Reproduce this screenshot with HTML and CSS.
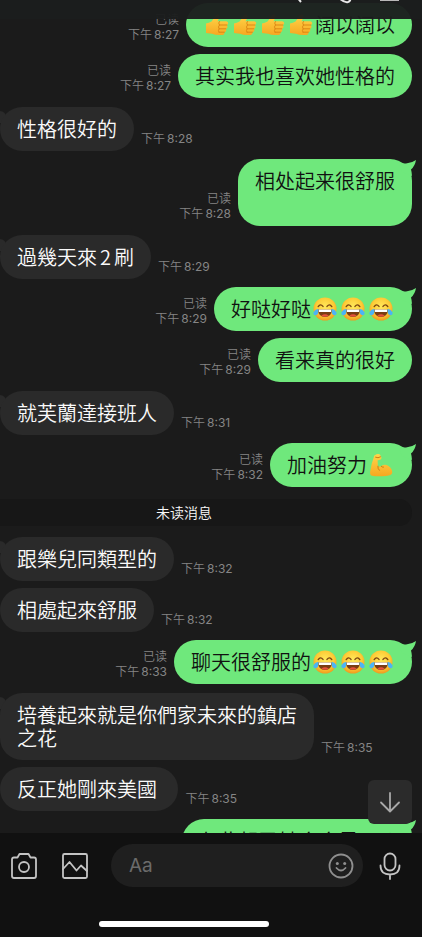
FILE: index.html
```html
<!DOCTYPE html>
<html lang="zh">
<head>
<meta charset="utf-8">
<meta name="viewport" content="width=device-width, initial-scale=1">
<title>聊天</title>
<link rel="stylesheet" href="styles.css">
</head>
<body>
<svg class="defs" aria-hidden="true">
  <defs>
    <radialGradient id="face" cx="50%" cy="40%" r="60%">
      <stop offset="0" stop-color="#ffe95c"/>
      <stop offset="0.65" stop-color="#fdcb35"/>
      <stop offset="1" stop-color="#ef9a1e"/>
    </radialGradient>
    <linearGradient id="skin" x1="0" y1="0" x2="0" y2="1">
      <stop offset="0" stop-color="#ffd54a"/>
      <stop offset="1" stop-color="#f6a821"/>
    </linearGradient>
    <symbol id="joy" viewBox="0 0 24 24">
      <circle cx="12" cy="12" r="11.500" fill="url(#face)"/>
      <path d="M5.2 9.600Q7.400 6.200 10 9.400M14 9.400Q16.600 6.200 18.800 9.600" fill="none" stroke="#7a4410" stroke-width="1.400" stroke-linecap="round"/>
      <path d="M5 12.600H19Q18.600 20 12 20T5 12.600Z" fill="#7a3d12"/>
      <path d="M5.600 12.600H18.400L18 15H6Z" fill="#fff"/>
      <path d="M8.200 18.700Q12 15.800 15.800 18.700Q12 21 8.200 18.700Z" fill="#e8503a"/>
      <path d="M5.200 11.800Q6 17.600 2.800 18.200Q-.4 18.300 .6 15.200Q1.600 12.800 5.200 11.800ZM18.800 11.800Q18 17.600 21.200 18.200Q24.400 18.300 23.400 15.200Q22.400 12.800 18.800 11.800Z" fill="#4cb4f5"/>
    </symbol>
    <symbol id="thumb" viewBox="0 0 24 24">
      <path d="M1 10.500Q4 10 6.500 8.500L11 2.500Q13.500 .3 14.500 3Q14.800 5 12.500 8.200H21.300Q23.300 8.600 23.200 10.200Q23 11.700 21.800 12Q23 13 22.400 14.500Q22 15.700 20.800 15.800Q21.800 17 21 18.300Q20.500 19.200 19.400 19.200Q19.900 21.500 17.500 21.900Q11 22.600 7 20.800L1 20Z" fill="url(#skin)"/>
      <path d="M14.500 12H21.800M14.200 15.800H20.800M14 19.200H19.400M14.500 8.400Q12.800 10 14.500 12Q12.600 14 14.200 15.800Q12.600 17.500 14 19.200" fill="none" stroke="#d98313" stroke-width=".9" stroke-linecap="round"/>
    </symbol>
    <symbol id="arm" viewBox="0 0 24 24">
      <path d="M5.300 2.500Q9 .2 11 1.500L12.500 4.700Q12.700 6.600 10.500 7L8.600 7.200L8.900 13.200Q10.500 14 12 13.200Q15.500 10.600 19.500 12.900Q23.700 15.800 23.200 20Q22.800 22.500 17 22.900Q8 23.600 3 22.700Q.9 22.200 1 19.500Q2.500 10 5.300 2.500Z" fill="url(#skin)"/>
      <path d="M6.600 4.300Q9 5.500 11.500 3.900M8.900 13.200Q8.500 15.500 10.300 17.300M12.200 13.300Q13 14.400 14.500 14.200" fill="none" stroke="#cf7d14" stroke-width="1" stroke-linecap="round"/>
    </symbol>
    <symbol id="tail" viewBox="0 0 18 16">
      <path d="M0 1Q4 4 8 3.500Q14 3 18 0Q17 6 13 9.500Q13.800 12 14 16L4 12Z"/>
    </symbol>
  </defs>
</svg>

<div class="app">
  <header class="topbar">
    <svg class="topicons" viewBox="0 0 118 6" aria-hidden="true">
      <path d="M8-4L13 2M50-3Q56 3 60 2Q63 1 62-2" fill="none" stroke="#e8e8e8" stroke-width="2"/>
      <path d="M92 0H111" stroke="#b8b8b8" stroke-width="2"/>
    </svg>
  </header>

  <main class="chat">
    <div class="row out"><div class="meta"><span>已读</span><time>下午<i>8:27</i></time></div><div class="bubble"><svg class="emoji" role="img" aria-label="👍"><use href="#thumb"/></svg><svg class="emoji" role="img" aria-label="👍"><use href="#thumb"/></svg><svg class="emoji" role="img" aria-label="👍"><use href="#thumb"/></svg><svg class="emoji" role="img" aria-label="👍"><use href="#thumb"/></svg>阔以阔以</div></div>
    <div class="row out same"><div class="meta"><span>已读</span><time>下午<i>8:27</i></time></div><div class="bubble">其实我也喜欢她性格的</div></div>
    <div class="row in first"><div class="bubble">性格很好的</div><div class="meta"><time>下午<i>8:28</i></time></div></div>
    <div class="row out first"><div class="meta"><span>已读</span><time>下午<i>8:28</i></time></div><div class="bubble">相处起来很舒服<br><br><svg class="tail" aria-hidden="true"><use href="#tail"/></svg></div></div>
    <div class="row in first"><div class="bubble">過幾天來<span class="num">2</span>刷</div><div class="meta"><time>下午<i>8:29</i></time></div></div>
    <div class="row out first"><div class="meta"><span>已读</span><time>下午<i>8:29</i></time></div><div class="bubble">好哒好哒<svg class="emoji" role="img" aria-label="😂"><use href="#joy"/></svg><svg class="emoji" role="img" aria-label="😂"><use href="#joy"/></svg><svg class="emoji" role="img" aria-label="😂"><use href="#joy"/></svg><svg class="tail" aria-hidden="true"><use href="#tail"/></svg></div></div>
    <div class="row out same"><div class="meta"><span>已读</span><time>下午<i>8:29</i></time></div><div class="bubble">看来真的很好</div></div>
    <div class="row in first"><div class="bubble">就芙蘭達接班人</div><div class="meta"><time>下午<i>8:31</i></time></div></div>
    <div class="row out first"><div class="meta"><span>已读</span><time>下午<i>8:32</i></time></div><div class="bubble">加油努力<svg class="emoji" role="img" aria-label="💪"><use href="#arm"/></svg><svg class="tail" aria-hidden="true"><use href="#tail"/></svg></div></div>
    <div class="notice">未读消息</div>
    <div class="row in lead"><div class="bubble">跟樂兒同類型的</div><div class="meta"><time>下午<i>8:32</i></time></div></div>
    <div class="row in same"><div class="bubble">相處起來舒服</div><div class="meta"><time>下午<i>8:32</i></time></div></div>
    <div class="row out first"><div class="meta"><span>已读</span><time>下午<i>8:33</i></time></div><div class="bubble">聊天很舒服的<svg class="emoji" role="img" aria-label="😂"><use href="#joy"/></svg><svg class="emoji" role="img" aria-label="😂"><use href="#joy"/></svg><svg class="emoji" role="img" aria-label="😂"><use href="#joy"/></svg><svg class="tail" aria-hidden="true"><use href="#tail"/></svg></div></div>
    <div class="row in first"><div class="bubble">培養起來就是你們家未來的鎮店之花</div><div class="meta"><time>下午<i>8:35</i></time></div></div>
    <div class="row in same"><div class="bubble">反正她剛來美國&nbsp;</div><div class="meta"><time>下午<i>8:35</i></time></div></div>
    <div class="row out first"><div class="bubble">七此起已她会会是了 :)<svg class="tail" aria-hidden="true"><use href="#tail"/></svg></div></div>
    <button class="down" type="button" aria-label="最新消息"><svg viewBox="0 0 44 44"><path d="M22 13V31M13 22.500L22 31.500L31 22.500"/></svg></button>
  </main>

  <footer class="composer">
    <div class="tools">
      <button type="button" aria-label="相机"><svg viewBox="0 0 28 28"><path d="M2 7.500Q2 5.500 4 5.500H7.500L9.500 2H18.500L20.500 5.500H24Q26 5.500 26 7.500V24Q26 26 24 26H4Q2 26 2 24Z"/><circle cx="14" cy="15" r="5"/></svg></button>
      <button type="button" aria-label="相册"><svg viewBox="0 0 28 28"><rect x="2" y="2" width="24" height="24" rx="1.500"/><path d="M2 17L8.500 10L15.500 18.500L20 13.500L26 19"/></svg></button>
      <div class="field">
        <input type="text" placeholder="Aa" aria-label="消息">
        <button type="button" aria-label="表情"><svg viewBox="0 0 28 28"><circle cx="14" cy="14" r="11.500"/><path d="M9.500 16Q14 21 18.500 16"/><circle class="dot" cx="10.300" cy="11.500" r="1.500"/><circle class="dot" cx="17.700" cy="11.500" r="1.500"/></svg></button>
      </div>
      <button type="button" aria-label="语音"><svg viewBox="0 0 28 28"><rect x="8.500" y="1.500" width="11" height="17" rx="5.500"/><path d="M4.500 13.500Q4.500 22.500 14 22.500T23.500 13.500M14 22.500V27"/></svg></button>
    </div>
    <div class="home"></div>
  </footer>
</div>
</body>
</html>
```
FILE: styles.css
```css
* { box-sizing: border-box; }
body {
  margin: 0;
  background: #1b1b1b;
  color: #fafafa;
  font-family: "Noto Sans CJK SC", sans-serif;
  font-weight: 350;
}
button { padding: 0; border: 0; background: none; display: block; }
.defs { position: absolute; width: 0; height: 0; }
.app { display: flex; flex-direction: column; height: 100vh; overflow: hidden; position: relative; }

.topbar {
  position: absolute; top: 0; left: 0; right: 0; z-index: 2;
  height: 19px;
  background: rgba(27, 29, 29, 0.96);
  display: flex; justify-content: flex-end;
}
.topicons { width: 118px; height: 6px; margin-right: 16px; }

.chat { flex: 1; min-height: 0; overflow: hidden; position: relative; padding-top: 3px; }
.row { display: flex; align-items: flex-end; gap: 7px; }
.out { justify-content: flex-end; padding-right: 10px; }
.same { margin-top: 7px; }
.out.first { margin-top: 8px; }
.in.first { margin-top: 9px; }
.lead { margin-top: 11px; }

.bubble {
  position: relative;
  max-width: 314px;
  padding: 10px 17px 11px;
  border-radius: 22px;
  font-size: 20px;
  line-height: 23px;
}
.in .bubble { background: #2a2a2a; font-family: "Noto Sans CJK TC", sans-serif; }
.in.first .bubble::before, .lead .bubble::before {
  content: "";
  position: absolute; left: 0; top: 4px;
  width: 6px; height: 12px;
  background: #2a2a2a;
  border-top-right-radius: 6px;
  z-index: -1;
}
.out .bubble { background: #6fe87c; color: #111; }
.tail { position: absolute; right: -4px; top: 1px; width: 18px; height: 16px; fill: #6fe87c; }
.emoji { width: 24px; height: 24px; margin: 0 2px -1px; vertical-align: top; }
.num { margin: 0 3px; }

.meta {
  display: flex; flex-direction: column; align-items: flex-end;
  margin-bottom: 5px;
  color: #858585;
  font-size: 12px; line-height: 15px;
  white-space: nowrap;
}
.meta i { font-family: Inter, sans-serif; font-style: normal; font-weight: 400; margin-left: 2px; }

.notice {
  margin: 12px 10px 0 0;
  padding-right: 44px;
  border-radius: 0 13px 13px 0;
  background: #171717;
  font-size: 14px; line-height: 27px;
  text-align: center;
}

.down {
  position: absolute; right: 10px; bottom: 9px;
  width: 44px; height: 44px;
  border-radius: 6px;
  background: #2b2b2b;
}
.down svg, .tools svg { display: block; fill: none; stroke: #c4c4c4; stroke-width: 1.8; stroke-linejoin: round; stroke-linecap: round; }
.down svg { width: 44px; height: 44px; stroke: #a8a8a8; }

.composer { height: 104px; background: #111; padding-top: 11px; display: flex; flex-direction: column; }
.tools { display: flex; align-items: center; padding: 0 18px 0 10px; }
.tools svg { width: 28px; height: 28px; }
.tools > button + button { margin-left: 23px; }
.field {
  flex: 1; min-width: 0;
  display: flex; align-items: center;
  height: 43px;
  margin: 0 13px 0 22px;
  padding: 0 8px 0 18px;
  border-radius: 22px;
  background: #1f1f1f;
}
.field input {
  flex: 1; min-width: 0;
  padding: 0; border: 0; outline: 0; background: none;
  color: #eee;
  font: 19px/24px Inter, sans-serif;
}
.field input::placeholder { color: #6b6b6b; opacity: 1; }
.field svg { stroke: #8f8f8f; }
.field .dot { fill: #8f8f8f; stroke: none; }
.home { width: 170px; height: 6px; margin: auto 0 10px 99px; border-radius: 3px; background: #fff; }
```
